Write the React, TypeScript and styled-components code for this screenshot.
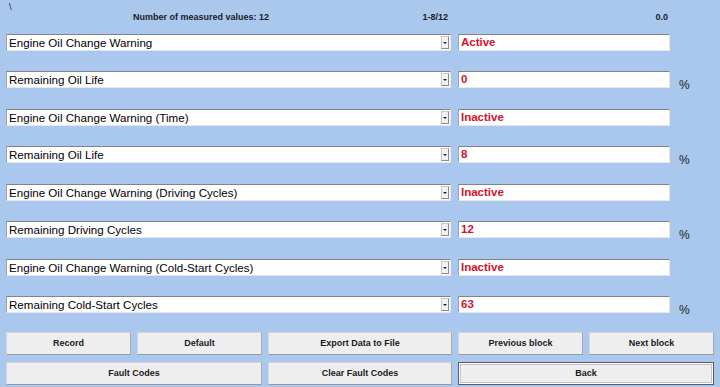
import React from "react";
import styled, { createGlobalStyle } from "styled-components";

const GlobalStyle = createGlobalStyle`
    html, body {
        margin: 0;
        padding: 0;
        background-color: #aac8ee;
    }
    body {
        font-family: "Liberation Sans", Arial, sans-serif;
    }
`;

const Page = styled.div`
    width: 720px;
    height: 387px;
    box-sizing: border-box;
    padding: 0 6px;
    background-color: #aac8ee;
    overflow: hidden;
`;

const Slash = styled.div`
    height: 12px;
    padding: 3px 0 0 3px;
    box-sizing: border-box;
    font-size: 9px;
    line-height: 9px;
    color: #1b1b2a;
`;

const HeaderBar = styled.div`
    display: grid;
    grid-template-columns: 445px 212px;
    column-gap: 7px;
    height: 11px;
    font-size: 9px;
    line-height: 11px;
    font-weight: bold;
    color: #1b1b2a;
`;

const HeaderCell = styled.div`
    display: flex;
    justify-content: space-between;
    padding: 0 3px 0 127px;
`;

const ValueHead = styled.div`
    text-align: right;
    padding-right: 2px;
`;

const Rows = styled.div`
    display: flex;
    flex-direction: column;
    gap: 20.43px;
    margin-top: 11px;
`;

const Row = styled.div`
    display: grid;
    grid-template-columns: 445px 212px auto;
    column-gap: 7px;
    height: 17px;
`;

const Select = styled.div`
    position: relative;
    box-sizing: border-box;
    height: 17px;
    background: #ffffff;
    border-top: 1px solid #7f8488;
    border-left: 1px solid #9ea3a8;
    border-right: 1px solid #e4e8ee;
    border-bottom: 1px solid #e4e8ee;
    font-size: 11.6px;
    line-height: 15px;
    padding-left: 2px;
    color: #000;
    white-space: nowrap;
`;

const Arrow = styled.span`
    position: absolute;
    right: 1px;
    top: 1px;
    width: 8px;
    height: 13px;
    box-sizing: border-box;
    background: #f2f2f2;
    border: 1px solid #c8c8c8;
    border-right-color: #8a8a8a;
    border-bottom-color: #8a8a8a;
    &::after {
        content: "";
        position: absolute;
        left: 1px;
        top: 5px;
        border-left: 2px solid transparent;
        border-right: 2px solid transparent;
        border-top: 2px solid #222;
    }
`;

const ValueBox = styled.div`
    box-sizing: border-box;
    height: 17px;
    background: #ffffff;
    border-top: 1px solid #7f8488;
    border-left: 1px solid #9ea3a8;
    border-right: 1px solid #e4e8ee;
    border-bottom: 1px solid #e4e8ee;
    font-size: 11.5px;
    line-height: 15px;
    font-weight: bold;
    color: #d2122e;
    padding-left: 2px;
`;

const Unit = styled.div`
    font-size: 12px;
    line-height: 12px;
    color: #222;
    padding-left: 2px;
    margin-top: 8px;
`;

const Buttons = styled.div`
    display: grid;
    grid-template-columns: 125px 125px 184px 125px 125px;
    grid-auto-rows: 23px;
    column-gap: 6px;
    row-gap: 7px;
    margin-top: 19px;
`;

const Button = styled.div<{ $span?: number; $focused?: boolean }>`
    grid-column: span ${(p) => p.$span ?? 1};
    display: flex;
    align-items: center;
    justify-content: center;
    box-sizing: border-box;
    background: #eeeeee;
    border: 1px solid #d6d6d6;
    border-bottom-color: #9a9a9a;
    border-right-color: #a8a8a8;
    font-size: 9px;
    font-weight: bold;
    color: #1a1a1a;
    ${(p) =>
        p.$focused &&
        `
        border: 1px solid #5c5c5c;
        box-shadow: inset 0 0 0 1px #ffffff, inset 0 0 0 2px #c4c4c4;
    `}
`;

const rows: { label: string; value: string; unit?: string }[] = [
    { label: "Engine Oil Change Warning", value: "Active" },
    { label: "Remaining Oil Life", value: "0", unit: "%" },
    { label: "Engine Oil Change Warning (Time)", value: "Inactive" },
    { label: "Remaining Oil Life", value: "8", unit: "%" },
    { label: "Engine Oil Change Warning (Driving Cycles)", value: "Inactive" },
    { label: "Remaining Driving Cycles", value: "12", unit: "%" },
    { label: "Engine Oil Change Warning (Cold-Start Cycles)", value: "Inactive" },
    { label: "Remaining Cold-Start Cycles", value: "63", unit: "%" },
];

export default function App() {
    return (
        <>
            <GlobalStyle />
            <Page>
                <Slash>\</Slash>
                <HeaderBar>
                    <HeaderCell>
                        <span>Number of measured values: 12</span>
                        <span>1-8/12</span>
                    </HeaderCell>
                    <ValueHead>0.0</ValueHead>
                </HeaderBar>
                <Rows>
                    {rows.map((r, i) => (
                        <Row key={i}>
                            <Select>
                                {r.label}
                                <Arrow />
                            </Select>
                            <ValueBox>{r.value}</ValueBox>
                            <Unit>{r.unit ?? ""}</Unit>
                        </Row>
                    ))}
                </Rows>
                <Buttons>
                    <Button>Record</Button>
                    <Button>Default</Button>
                    <Button>Export Data to File</Button>
                    <Button>Previous block</Button>
                    <Button>Next block</Button>
                    <Button $span={2}>Fault Codes</Button>
                    <Button>Clear Fault Codes</Button>
                    <Button $span={2} $focused>
                        Back
                    </Button>
                </Buttons>
            </Page>
        </>
    );
}
